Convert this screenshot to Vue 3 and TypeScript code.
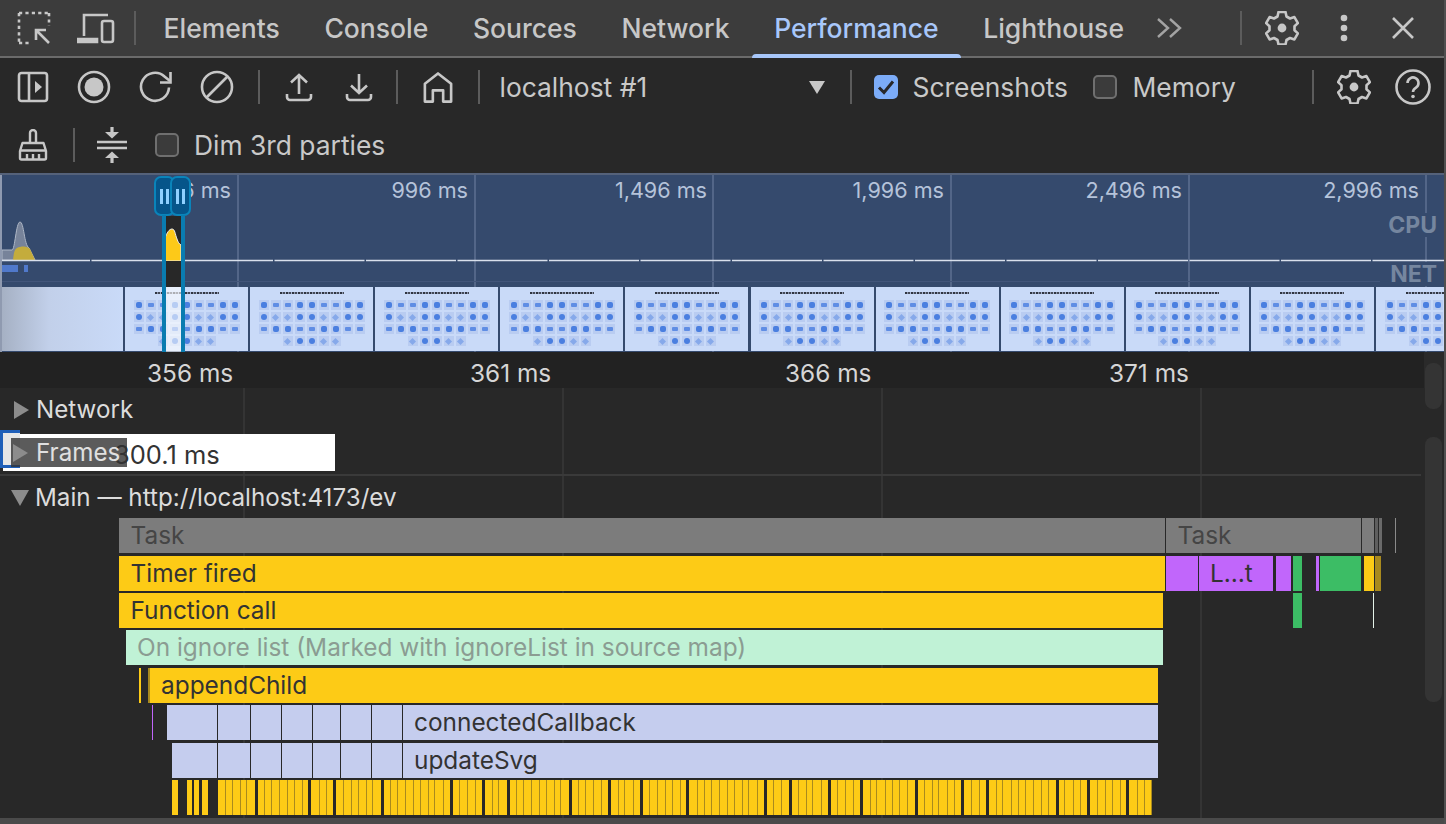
<script setup lang="ts">
interface Bar { x: number; w: number; c: string; label?: string; textX?: number; tone?: string }

const YELLOW = '#fdcb16'
const OLIVE = '#a98a1e'
const PURPLE = '#c166fb'
const GREEN = '#3cbd65'
const TASK = '#7c7c7c'
const LAV = '#c5cdee'
const MINT = '#c0f2d6'

const tabs = ['Elements', 'Console', 'Sources', 'Network', 'Performance', 'Lighthouse']

const stamps = [
  { t: '496 ms', right: 1215 },
  { t: '996 ms', right: 978 },
  { t: '1,496 ms', right: 739 },
  { t: '1,996 ms', right: 502 },
  { t: '2,496 ms', right: 264 },
  { t: '2,996 ms', right: 27 },
]
const gridLines = [237, 474, 712, 950, 1188, 1425]
const ruler = [
  { t: '356 ms', x: 147 },
  { t: '361 ms', x: 470 },
  { t: '366 ms', x: 785 },
  { t: '371 ms', x: 1109 },
]
const trackLines = [243, 562, 881, 1200]

// screenshot strip, every frame shows the same icon sheet
const frames = Array.from({ length: 11 }, (_, i) => i)
const sheetRows = [9, 9, 9, 5]
const tileShape = (r: number, c: number) => `s${(r * 5 + c * 3 + (c % 2)) % 4}`

const rows: { top: number; bars: Bar[] }[] = [
  {
    top: 0,
    bars: [
      { x: 119, w: 1046, c: TASK, label: 'Task' },
      { x: 1166, w: 195, c: TASK, label: 'Task' },
      { x: 1362, w: 12, c: TASK },
      { x: 1375, w: 3, c: '#5e5e5e' },
      { x: 1379, w: 3, c: '#6a6a6a' },
      { x: 1395, w: 1, c: '#8a8a8a' },
    ],
  },
  {
    top: 38,
    bars: [
      { x: 119, w: 1046, c: YELLOW, label: 'Timer fired' },
      { x: 1166, w: 32, c: PURPLE },
      { x: 1199, w: 74, c: PURPLE, label: 'L…t', textX: 11 },
      { x: 1276, w: 15, c: PURPLE },
      { x: 1293, w: 9, c: GREEN },
      { x: 1316, w: 3, c: PURPLE },
      { x: 1320, w: 41, c: GREEN },
      { x: 1364, w: 10, c: YELLOW },
      { x: 1375, w: 6, c: OLIVE },
    ],
  },
  {
    top: 75,
    bars: [
      { x: 119, w: 1044, c: YELLOW, label: 'Function call' },
      { x: 1293, w: 9, c: GREEN },
      { x: 1373, w: 1, c: '#e4f2e8' },
    ],
  },
  {
    top: 112,
    bars: [{ x: 126, w: 1037, c: MINT, label: 'On ignore list (Marked with ignoreList in source map)', textX: 11, tone: '#8b9c92' }],
  },
  {
    top: 150,
    bars: [
      { x: 139, w: 1.5, c: YELLOW },
      { x: 148, w: 2, c: OLIVE },
      { x: 150, w: 1008, c: YELLOW, label: 'appendChild', textX: 11 },
    ],
  },
  {
    top: 187,
    bars: [
      { x: 152, w: 1, c: PURPLE },
      { x: 167, w: 50, c: LAV },
      ...lavenders(),
      { x: 403, w: 755, c: LAV, label: 'connectedCallback', textX: 11 },
    ],
  },
  {
    top: 225,
    bars: [
      { x: 172, w: 45, c: LAV },
      ...lavenders(),
      { x: 403, w: 755, c: LAV, label: 'updateSvg', textX: 11 },
    ],
  },
  { top: 262, bars: stripes() },
]

function lavenders(): Bar[] {
  const edges = [218, 251, 282, 313, 341, 372, 403]
  return edges.slice(0, -1).map((x, i) => ({ x, w: edges[i + 1] - x - 1, c: LAV }))
}

// the run of tiny appendChild calls at the bottom of the chart
function stripes(): Bar[] {
  const out: Bar[] = [
    { x: 172, w: 6, c: YELLOW },
    { x: 187, w: 5, c: YELLOW },
    { x: 194, w: 5, c: YELLOW },
    { x: 202, w: 6, c: YELLOW },
  ]
  // how many calls sit side by side before a longer pause
  const groups = [5, 7, 3, 6, 9, 4, 3, 8, 5, 4, 6, 10, 3, 5, 4, 7, 6, 3, 9, 4, 5, 8, 3, 6, 4, 7]
  const widths = [7, 6, 7, 5, 8, 6, 6, 7]
  let x = 218
  let n = 0
  let g = 0
  let left = groups[0]
  while (x < 1152) {
    const w = Math.min(widths[n++ % widths.length], 1154 - x)
    out.push({ x, w, c: YELLOW })
    left--
    if (left === 0) {
      g = (g + 1) % groups.length
      left = groups[g]
      x += w + 3
    } else {
      out.push({ x: x + w, w: 1, c: OLIVE })
      x += w + 1
    }
  }
  return out
}

const barStyle = (b: Bar) => ({
  left: `${b.x}px`,
  width: `${b.w}px`,
  background: b.c,
  color: b.tone,
  paddingLeft: b.label ? `${b.textX ?? 11.5}px` : undefined,
})
</script>

<template>
  <div class="panel">
    <header class="tabbar">
      <span class="ico first">
        <svg width="36" height="36" viewBox="0 0 36 36" fill="none" stroke="#c7c7c7" stroke-width="2.6">
          <path d="M3 3h30M3 3v30M33 3v13M3 33h11" stroke-dasharray="3.2 3.2" />
          <path d="M33 33 20 20M20 30V20h10" />
        </svg>
      </span>
      <span class="ico device">
        <svg width="38" height="32" viewBox="0 0 38 32" fill="none" stroke="#c7c7c7" stroke-width="2.6">
          <path d="M7 24V3h24" />
          <path d="M1 27h19v3H1z" fill="#c7c7c7" />
          <rect x="25" y="9" width="11" height="21" rx="2" />
        </svg>
      </span>
      <i class="sep tabsep"></i>
      <nav class="tabs">
        <span v-for="t in tabs" :key="t" class="tab" :class="{ active: t === 'Performance' }">{{ t }}</span>
      </nav>
      <span class="more">
        <svg width="28" height="22" viewBox="0 0 28 22" fill="none" stroke="#a3a3a3" stroke-width="2.4">
          <path d="m2 2 10 9-10 9M14 2l10 9-10 9" />
        </svg>
      </span>
      <i class="sep moresep"></i>
      <span class="ico gear">
        <svg width="34" height="34" viewBox="0 0 34 34" fill="none" stroke="#c7c7c7" stroke-width="2.6">
          <path stroke-linejoin="round" d="M13.500 2h7l1 4.500 3.500 2 4.400-1.400 3.500 6-3.400 3.100v4.100l3.400 3.100-3.500 6-4.400-1.400-3.500 2-1 4.500h-7l-1-4.500-3.500-2-4.400 1.400-3.500-6 3.400-3.100v-4.100L1.100 13.100l3.500-6L9 8.500l3.500-2z" transform="translate(0 -1)" />
          <circle cx="17" cy="17" r="4.400" fill="#c7c7c7" stroke="none" />
        </svg>
      </span>
      <span class="ico dots">
        <svg width="10" height="28" viewBox="0 0 10 28" fill="#c7c7c7">
          <circle cx="5" cy="4" r="3.300" /><circle cx="5" cy="14" r="3.300" /><circle cx="5" cy="24" r="3.300" />
        </svg>
      </span>
      <span class="ico close">
        <svg width="24" height="24" viewBox="0 0 24 24" stroke="#c7c7c7" stroke-width="2.6">
          <path d="m2 2 20 20M22 2 2 22" />
        </svg>
      </span>
    </header>

    <div class="toolbar row-one">
      <span class="btn">
        <svg width="32" height="32" viewBox="0 0 32 32" fill="none" stroke="#c7c7c7" stroke-width="2.600">
          <rect x="2" y="2" width="28" height="28" rx="2.500" />
          <path d="M12 2v28" />
          <path d="m18 10 7 6-7 6z" fill="#c7c7c7" stroke="none" />
        </svg>
      </span>
      <span class="btn">
        <svg width="34" height="34" viewBox="0 0 34 34" fill="none" stroke="#c7c7c7" stroke-width="2.600">
          <circle cx="17" cy="17" r="15" />
          <circle cx="17" cy="17" r="9.500" fill="#c7c7c7" stroke="none" />
        </svg>
      </span>
      <span class="btn">
        <svg width="34" height="34" viewBox="0 0 34 34" fill="none" stroke="#c7c7c7" stroke-width="2.600">
          <path d="M30 17.500A14 14 0 1 1 25.500 6.500L31 11" />
          <path d="M31.500 2v10.500H21" />
        </svg>
      </span>
      <span class="btn">
        <svg width="34" height="34" viewBox="0 0 34 34" fill="none" stroke="#c7c7c7" stroke-width="2.600">
          <circle cx="17" cy="17" r="15" />
          <path d="M6.500 27.500 27.500 6.500" />
        </svg>
      </span>
      <i class="sep sep-a"></i>
      <span class="btn upload">
        <svg width="28" height="30" viewBox="0 0 28 30" fill="none" stroke="#c7c7c7" stroke-width="2.600">
          <path d="M14 22V3M6 10.500 14 3l8 7.500M2 22v3a3 3 0 0 0 3 3h18a3 3 0 0 0 3-3v-3" />
        </svg>
      </span>
      <span class="btn updown">
        <svg width="28" height="30" viewBox="0 0 28 30" fill="none" stroke="#c7c7c7" stroke-width="2.600">
          <path d="M14 2v19M6 13.500l8 7.500 8-7.500M2 22v3a3 3 0 0 0 3 3h18a3 3 0 0 0 3-3v-3" />
        </svg>
      </span>
      <i class="sep sep-b"></i>
      <span class="btn home">
        <svg width="30" height="33" viewBox="0 0 32 34" fill="none" stroke="#c7c7c7" stroke-width="2.800">
          <path stroke-linejoin="round" d="M2 32V13L16 2l14 11v19h-8.500V20h-11v12z" />
        </svg>
      </span>
      <i class="sep sep-c"></i>
      <span class="label host">localhost #1</span>
      <i class="caret"></i>
      <i class="sep sep-d"></i>
      <span class="check on">
        <svg width="24" height="24" viewBox="0 0 24 24" fill="none" stroke="#28282a" stroke-width="3">
          <path d="m5 12.500 5 5 9-11" />
        </svg>
      </span>
      <span class="label shots">Screenshots</span>
      <span class="check"></span>
      <span class="label mem">Memory</span>
      <i class="sep sep-e"></i>
      <span class="btn gear2">
        <svg width="34" height="34" viewBox="0 0 34 34" fill="none" stroke="#c7c7c7" stroke-width="2.600">
          <path stroke-linejoin="round" d="M13.500 2h7l1 4.500 3.500 2 4.400-1.400 3.500 6-3.400 3.100v4.100l3.400 3.100-3.500 6-4.400-1.400-3.500 2-1 4.500h-7l-1-4.500-3.500-2-4.400 1.400-3.500-6 3.400-3.100v-4.100L1.100 13.100l3.500-6L9 8.500l3.500-2z" transform="translate(0 -1)" />
          <circle cx="17" cy="17" r="4.400" fill="#c7c7c7" stroke="none" />
        </svg>
      </span>
      <span class="btn help">
        <svg width="36" height="36" viewBox="0 0 36 36" fill="none" stroke="#c7c7c7" stroke-width="2.600">
          <circle cx="18" cy="18" r="16.500" />
          <path d="M12.500 14a5.500 5.500 0 1 1 8.500 4.600c-2 1.300-3 2.200-3 4.400" />
          <circle cx="18" cy="27.500" r="1.800" fill="#c7c7c7" stroke="none" />
        </svg>
      </span>
    </div>

    <div class="toolbar row-two">
      <span class="btn">
        <svg width="32" height="32" viewBox="0 0 32 32" fill="none" stroke="#c7c7c7" stroke-width="2.400">
          <path d="M13 13V4a3 3 0 0 1 6 0v9" />
          <path stroke-linejoin="round" d="M5.500 14h21l2.500 8v7a1.500 1.500 0 0 1-1.500 1.500h-23A1.500 1.500 0 0 1 3 29v-7z" />
          <path d="M3 21.500h26M10 25v5M16 25v5M22 25v5" />
        </svg>
      </span>
      <i class="sep sep-f"></i>
      <span class="btn collapse">
        <svg width="32" height="40" viewBox="0 0 32 40" fill="#c7c7c7" stroke="#c7c7c7">
          <path d="M1 17h30M1 23h30" stroke-width="2.600" fill="none" />
          <path d="M16 2v6" stroke-width="3.200" fill="none" />
          <path d="m9 7 7 6.500L23 7z" stroke="none" />
          <path d="M16 38v-6" stroke-width="3.200" fill="none" />
          <path d="m9 33 7-6.500 7 6.500z" stroke="none" />
        </svg>
      </span>
      <span class="check dim"></span>
      <span class="label">Dim 3rd parties</span>
    </div>

    <section class="overview">
      <i v-for="x in gridLines" :key="x" class="ov-grid" :style="{ left: x + 'px' }"></i>
      <span
        v-for="s in stamps"
        :key="s.t"
        class="stamp"
        :style="{ right: s.right + 'px' }"
      >{{ s.t }}</span>
      <span class="ov-tag cpu">CPU</span>
      <span class="ov-tag net">NET</span>

      <div class="charts">
        <svg width="1446" height="114" viewBox="0 0 1446 114">
          <path d="M2 85V75h10c3 0 4-28 8-28s4 23 9 26l6 12z" fill="#77839a" stroke="#aeb7c6" stroke-width="1" />
          <path d="M13 85c1-10 2-12 7-13s8 0 10 2l5 11z" fill="#c4ac3c" />
          <path d="M0 85.500H1446" stroke="#d9e0ec" stroke-width="1.500" stroke-dasharray="90 1.500" />
          <path d="M2 90h16v7H2zM24 90h4v7h-4z" fill="#5079cb" />
          <path d="M0 106.500H1380" stroke="#42557a" stroke-width="1" />
        </svg>
      </div>

      <div class="strip">
        <div class="shot blank"></div>
        <div v-for="f in frames" :key="f" class="shot">
          <i class="sheet-title"></i>
          <div v-for="(n, r) in sheetRows" :key="r" class="sheet-row">
            <i v-for="c in n" :key="c" class="tile"><b :class="tileShape(r, c)"></b></i>
          </div>
        </div>
      </div>

      <div class="window">
        <svg width="16" height="45" viewBox="0 0 16 45" class="win-chart">
          <path d="M0 45V22C2 17 4 13 7 13s3 5 5 10c1 3 2 5 4 6v16z" fill="#fdc918" stroke="#eee" stroke-width="1" />
        </svg>
      </div>
      <i class="grip left"><b></b><b></b></i>
      <i class="grip right"><b></b><b></b></i>
    </section>

    <div class="ruler">
      <span v-for="r in ruler" :key="r.t" class="ruler-item" :style="{ left: r.x + 'px' }">{{ r.t }}</span>
    </div>

    <section class="tracks">
      <i v-for="x in trackLines" :key="x" class="tr-grid" :style="{ left: x + 'px' }"></i>

      <div class="track network"><i class="tri"></i>Network</div>

      <div class="track frames">
        <div class="tip"><span class="tip-time">300.1 ms</span></div>
        <i class="bracket"></i>
        <div class="frames-label"><i class="tri"></i>Frames</div>
      </div>

      <div class="track main"><i class="tri down"></i>Main — http://localhost:4173/ev</div>

      <div class="flame">
        <div v-for="row in rows" :key="row.top" class="flame-row" :style="{ top: row.top + 'px' }">
          <div v-for="(b, i) in row.bars" :key="i" class="bar" :style="barStyle(b)">{{ b.label }}</div>
        </div>
      </div>
    </section>

    <footer class="foot"></footer>

    <div class="scroll">
      <i class="thumb one"></i>
      <i class="thumb two"></i>
    </div>
  </div>
</template>

<style scoped>
.panel {
  width: 1446px;
  height: 824px;
  display: flex;
  flex-direction: column;
  overflow: hidden;
  position: relative;
  background: #282828;
  color: #d0d0d0;
  font-family: Inter, "Liberation Sans", sans-serif;
  font-size: 26.400px;
}
.panel::after {
  content: "";
  position: absolute;
  right: 0;
  top: 0;
  bottom: 0;
  width: 2px;
  background: #505050;
}
.sep {
  display: block;
  width: 2px;
  height: 34px;
  background: #5c5c5c;
  flex: none;
}

/* tab strip */
.tabbar {
  height: 58px;
  box-sizing: border-box;
  flex: none;
  display: flex;
  align-items: center;
  background: #3c3c3c;
  border-bottom: 2px solid #6b6b6b;
  position: relative;
}
.ico { display: flex; flex: none; }
.first { margin-left: 16px; }
.device { margin-left: 25px; }
.tabsep { margin-left: 19px; }
.tabs { display: flex; margin-left: 5.200px; align-self: stretch; }
.tab {
  display: flex;
  align-items: center;
  padding: 0 22.300px;
  color: #c7c7c7;
  position: relative;
  font-weight: 500;
  font-size: 26.500px;
}
.tab.active { color: #a8c7fa; }
.tab.active::after {
  content: "";
  position: absolute;
  left: 0;
  right: 0;
  bottom: -2px;
  height: 4px;
  border-radius: 4px 4px 0 0;
  background: #a8c7fa;
}
.more { display: flex; margin-left: 10px; }
.moresep { margin-left: 56px; }
.gear { margin-left: 23px; }
.dots { margin-left: 40px; }
.close { margin-left: 42px; }

/* toolbars */
.toolbar {
  flex: none;
  display: flex;
  align-items: center;
  background: #282828;
}
.row-one { height: 58px; }
.row-two { height: 57px; }
.btn { display: flex; justify-content: center; width: 61.500px; flex: none; }
.row-one .btn:first-child,
.row-two .btn:first-child { margin-left: 2px; }
.sep-a { margin-left: 10px; }
.upload { margin-left: 8px; }
.updown { margin-left: -1px; }
.sep-b { margin-left: 6px; }
.home { margin-left: 9px; }
.sep-c { margin-left: 9px; }
.label { color: #c9c9c9; white-space: nowrap; }
.host { margin-left: 20px; width: 309px; }
.caret {
  width: 0;
  height: 0;
  border-left: 8.500px solid transparent;
  border-right: 8.500px solid transparent;
  border-top: 13px solid #c7c7c7;
}
.sep-d { margin-left: 25px; }
.check {
  width: 24px;
  height: 24px;
  flex: none;
  box-sizing: border-box;
  border: 2px solid #6f6f6f;
  border-radius: 5px;
  background: #3b3b3b;
}
.check.on { margin-left: 22px; background: #7cacf8; border: 0; }
.check.on svg { display: block; }
.shots { margin: 0 25px 0 15px; width: 155px; }
.mem { margin-left: 16px; width: 179px; }
.gear2 { margin-left: 10px; }
.help { margin-left: -2.500px; }
.sep-f { margin-left: 9px; }
.collapse { margin-left: 7px; }
.dim { margin: 0 15px 0 12px; }

/* overview */
.overview {
  height: 179px;
  flex: none;
  position: relative;
  background: #354a6d;
  border-top: 2px solid #55627a;
  box-sizing: border-box;
  overflow: hidden;
}
.overview::before {
  content: "";
  position: absolute;
  left: 0;
  top: 0;
  bottom: 0;
  width: 2px;
  background: #8f9ab0;
  z-index: 1;
}
.ov-grid {
  position: absolute;
  top: 0;
  bottom: 0;
  width: 2px;
  background: #536688;
}
.stamp {
  position: absolute;
  top: 2px;
  font-size: 21.600px;
  line-height: 26px;
  color: #b5c3da;
}
.ov-tag {
  position: absolute;
  right: 9px;
  font-size: 23px;
  font-weight: 700;
  line-height: 24px;
  color: #75869f;
  background: #354a6d;
  z-index: 2;
}
.cpu { top: 38px; }
.net { top: 87px; }
.charts { position: absolute; left: 0; top: 0; }
.charts svg { display: block; }
.strip {
  position: absolute;
  left: 0;
  top: 112px;
  display: grid;
  grid-template-columns: repeat(12, 123px);
  column-gap: 2.100px;
  height: 64px;
}
.shot {
  background: #c9daf8;
  height: 64px;
  display: flex;
  flex-direction: column;
  align-items: center;
}
.blank {
  background: linear-gradient(90deg, #a4afc2 0, #c2d0ea 40%, #c9daf8 100%);
}
.sheet-title {
  width: 64px;
  height: 2px;
  margin: 5px 0 6px;
  background: repeating-linear-gradient(90deg, #2f3440 0 2px, #8a94ac 2px 3px, #444a58 3px 5px, #a9b6d4 5px 6px);
}
.sheet-row { display: flex; gap: 2px; margin-bottom: 2px; }
.tile {
  width: 10px;
  height: 10px;
  background: #b9ccf1;
  display: flex;
  align-items: center;
  justify-content: center;
}
.tile b { display: block; background: #4a7fe0; }
.tile .s0 { width: 6px; height: 6px; border-radius: 2px; }
.tile .s1 { width: 6px; height: 6px; border-radius: 50%; }
.tile .s2 { width: 6px; height: 4px; border-radius: 1px; background: #5f8de4; }
.tile .s3 { width: 5px; height: 5px; transform: rotate(45deg); background: #86a9ea; }
.window {
  position: absolute;
  left: 165px;
  top: 41px;
  width: 16px;
  height: 71px;
  background: #282828;
}
.win-chart { position: absolute; left: 0; top: 0; display: block; }
.window::after {
  content: "";
  position: absolute;
  left: 0;
  right: 0;
  top: 71px;
  height: 67px;
  background: rgba(255, 255, 255, 0.6);
}
.grip {
  position: absolute;
  top: 1px;
  width: 21px;
  height: 40px;
  box-sizing: border-box;
  background: #06558a;
  border: 2px solid #0a84ba;
  border-radius: 7px;
  display: flex;
  justify-content: center;
  align-items: center;
  gap: 3px;
  z-index: 3;
}
.grip b { display: block; width: 3px; height: 15px; background: #8fd0ff; }
.grip.left { left: 154px; }
.grip.right { left: 170px; }
.grip::after {
  content: "";
  position: absolute;
  top: 37px;
  width: 4px;
  height: 140px;
  background: #0a7cb0;
}
.grip.left::after { left: 6px; }
.grip.right::after { left: 9px; }

/* time ruler */
.ruler {
  height: 36px;
  flex: none;
  position: relative;
  background: linear-gradient(90deg, #222 1424px, #2a2a2a 1424px);
}
.ruler-item {
  position: absolute;
  top: 7px;
  font-size: 24.400px;
  line-height: 28px;
  color: #d6d6d6;
}

/* tracks */
.tracks {
  flex: 1;
  position: relative;
  min-height: 0;
  overflow: hidden;
  background: #282828;
}
.tr-grid {
  position: absolute;
  top: 0;
  bottom: 0;
  width: 2px;
  background: #343434;
}
.scroll {
  position: absolute;
  left: 1425px;
  top: 352px;
  bottom: 6px;
  width: 17px;
}
.thumb { position: absolute; left: 0; width: 17px; background: #343434; border-radius: 8px; }
.thumb.one { top: 11px; height: 46px; }
.thumb.two { top: 85px; height: 265px; }
.track {
  position: relative;
  display: flex;
  align-items: center;
  color: #dcdcdc;
  white-space: nowrap;
  line-height: 30px;
  font-size: 24.200px;
}
.tri {
  display: block;
  flex: none;
  width: 0;
  height: 0;
  margin: 0 7px 0 14px;
  border-top: 9px solid transparent;
  border-bottom: 9px solid transparent;
  border-left: 15px solid #8c8c8c;
}
.tri.down {
  margin: 0 6px 0 11px;
  border-left: 9px solid transparent;
  border-right: 9px solid transparent;
  border-top: 16px solid #8c8c8c;
  border-bottom: 0;
}
.network { height: 44px; }
.frames { height: 42px; }
.tip {
  position: absolute;
  left: 3px;
  top: 2px;
  width: 332px;
  height: 37px;
  background: #fff;
  color: #333;
  display: flex;
  align-items: center;
  padding-left: 111px;
  box-sizing: border-box;
}
.tip-time { position: relative; top: 2px; font-size: 25.500px; }
.bracket {
  position: absolute;
  left: 0;
  top: -2px;
  width: 20px;
  height: 38px;
  box-sizing: border-box;
  border: 3px solid #1f5fb8;
  border-right: 0;
  background: #e6e6e6;
}
.frames-label {
  position: absolute;
  left: 11px;
  top: 6px;
  width: 116px;
  height: 29px;
  background: rgba(50, 50, 50, 0.8);
  display: flex;
  align-items: center;
  color: #e0e0e0;
}
.frames-label .tri { margin: 0 8px 0 2px; }
.main {
  height: 44px;
  box-sizing: border-box;
  padding-top: 3px;
}
.main::before {
  content: "";
  position: absolute;
  left: 0;
  right: 25px;
  top: 0;
  height: 2px;
  background: #3a3a3a;
}
.flame { position: relative; }
.flame-row { position: absolute; left: 0; right: 0; }
.bar {
  position: absolute;
  top: 0;
  height: 35px;
  box-sizing: border-box;
  overflow: hidden;
  white-space: nowrap;
  line-height: 35px;
  font-size: 24.400px;
  color: #333;
}
.flame-row:first-child .bar { color: #454545; }

.foot {
  height: 6px;
  flex: none;
  background: #4a4a4a;
}
</style>
